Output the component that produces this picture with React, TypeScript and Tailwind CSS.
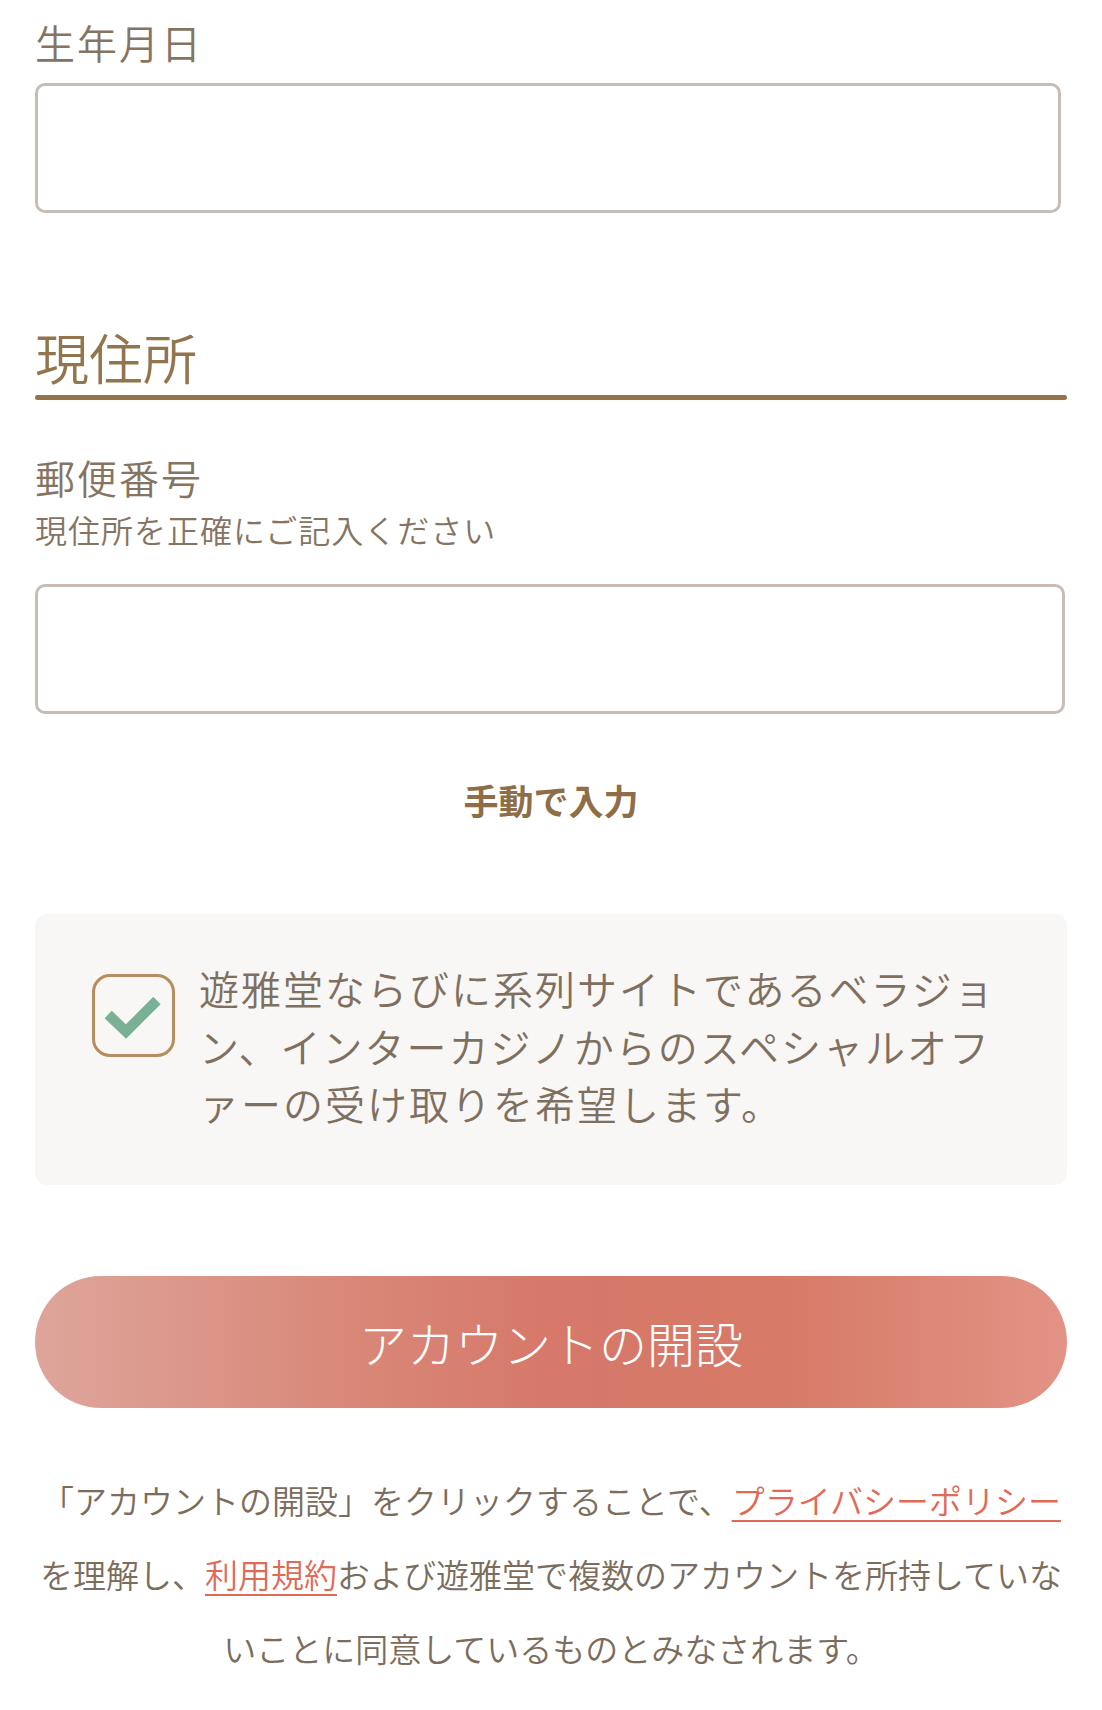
import { ReactNode } from "react";

const jp = "font-['Hiragino_Sans','Noto_Sans_CJK_JP',sans-serif]";

export default function App(): ReactNode {
  return (
    <div className={`w-full min-h-[1710px] bg-white px-[35px] pt-[12px] font-[350] ${jp}`}>
      <BirthDate />
      <AddressSection />
      <OfferBox />
      <SubmitButton />
      <Agreement />
    </div>
  );
}

function BirthDate(): ReactNode {
  return (
    <div className="flex flex-col">
      <p className="text-[40px] leading-[60px] tracking-[2px] text-[#857461]">生年月日</p>
      <div className="mt-[11px] mr-[6px] h-[130px] rounded-[10px] border-[3px] border-[#c8bdb5] bg-white" />
    </div>
  );
}

function AddressSection(): ReactNode {
  return (
    <div className="flex flex-col">
      <h2 className="mt-[109px] text-[54px] leading-[70px] text-[#93754d]">現住所</h2>
      <div className="mt-[3px] h-[5px] w-full rounded-full bg-[#93744b]" />

      <p className="mt-[47px] text-[40px] leading-[60px] tracking-[2px] text-[#857461]">郵便番号</p>
      <p className="mt-[1px] text-[32px] leading-[42px] tracking-[1px] text-[#857461]">現住所を正確にご記入ください</p>
      <div className="mt-[34px] mr-[2px] h-[130px] rounded-[10px] border-[3px] border-[#c8bdb5] bg-white" />

      <p className="mt-[60px] text-center text-[35px] font-bold leading-[52px] text-[#8e6d47]">手動で入力</p>
    </div>
  );
}

function OfferBox(): ReactNode {
  return (
    <div className="mt-[88px] flex items-start rounded-[12px] bg-[#f8f7f5] pl-[57px] pt-[46px] pb-[52px]">
      <div className="mt-[14px] flex h-[83px] w-[83px] shrink-0 items-center justify-center rounded-[18px] border-[3px] border-[#b78c5f]">
        <svg width="83" height="83" viewBox="0 0 82 82" fill="none">
          <path d="M14 40 L33 58 L66 25" stroke="#78b193" strokeWidth="11" strokeLinecap="butt" strokeLinejoin="miter" />
        </svg>
      </div>
      <p className="ml-[24px] w-[815px] text-[40px] leading-[57.5px] tracking-[2px] text-[#7f6f5f]">
        遊雅堂ならびに系列サイトであるベラジョン、インターカジノからのスペシャルオファーの受け取りを希望します。
      </p>
    </div>
  );
}

function SubmitButton(): ReactNode {
  return (
    <button className="mt-[91px] flex h-[132px] w-full items-center justify-center rounded-full bg-[linear-gradient(to_right,#dea59b_0%,#d98a7a_28%,#d6786a_50%,#d77a67_72%,#e29385_100%)] text-[48px] font-light text-white">
      アカウントの開設
    </button>
  );
}

function Agreement(): ReactNode {
  return (
    <p className="mt-[55px] pb-[30px] text-center text-[33px] leading-[74px] text-[#7c6c5c]">
      「アカウントの開設」をクリックすることで、
      <a className="text-[#e06a55] underline decoration-2 underline-offset-[6px]">プライバシーポリシー</a>
      を理解し、
      <a className="text-[#e06a55] underline decoration-2 underline-offset-[6px]">利用規約</a>
      および遊雅堂で複数のアカウントを所持していないことに同意しているものとみなされます。
    </p>
  );
}
